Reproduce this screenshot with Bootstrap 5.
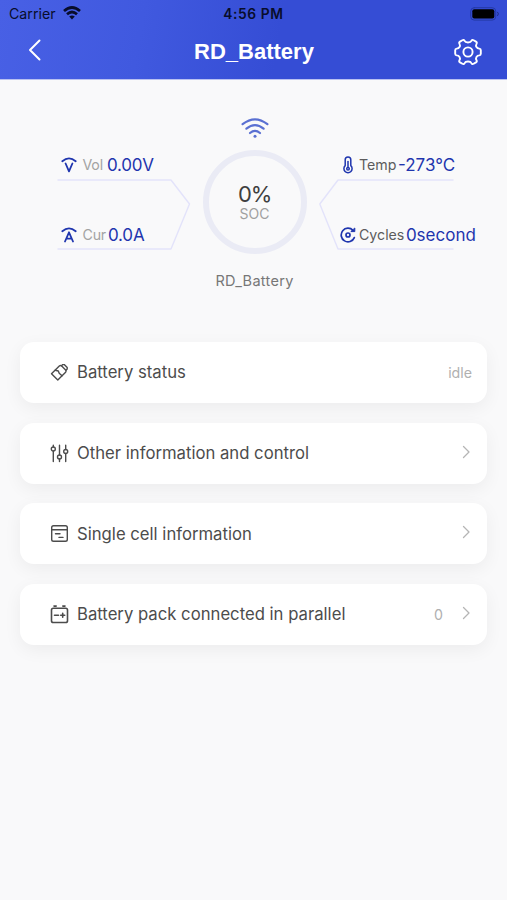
<!DOCTYPE html>
<html lang="en">
<head>
<meta charset="utf-8">
<meta name="viewport" content="width=device-width, initial-scale=1">
<title>RD_Battery</title>
<link href="https://cdn.jsdelivr.net/npm/bootstrap@5.3.0/dist/css/bootstrap.min.css" rel="stylesheet">
<style>
body{background:#f9f9fa;font-family:Inter,"Liberation Sans",sans-serif;color:#4c4c4c;min-height:900px;overflow:hidden}
svg{display:block;flex:none;fill:none;stroke:currentColor;stroke-linecap:round;stroke-linejoin:round}
.top-bar{height:79px;background:linear-gradient(100deg,#4860e5 0%,#4059df 28%,#354dd5 55%,#354dd5 100%);box-shadow:0 1px 0 #b9c1f1}
.status-bar{height:27px;padding:0 7px 0 9px;color:#080d2b;font-size:14.2px}
.status-wifi{stroke-linecap:butt;margin-left:7px}
.side{width:120px}
.clock{font-weight:600;font-size:13.8px;letter-spacing:.6px;position:relative;margin-right:2px;padding-top:1px}
.title-bar{height:50px;padding:0 25px 0 27px}
.title{font:700 22px/28px "Liberation Sans",sans-serif}
.gauge{padding:38px 0 0 57px;height:263px}
.panel{height:88px;margin-top:39px}
.panel-left{width:133px}
.panel-right{width:157px}
.frame-line{left:0;top:23px;color:#e3e3fa}
.reading{height:18px;line-height:18px;font-size:17px;white-space:nowrap;color:#1f35ae}
.panel-left .reading{padding-left:4px;letter-spacing:-.2px}
.panel-right .reading{padding-left:21px}
.reading .name{font-size:14.2px;color:#a3a3a3;margin-left:5.5px}
.panel-left .name{margin-right:2px}
.panel-right .name{color:#5c5c5c;margin-left:3.500px;margin-right:1.5px}
.center-col{width:104px;margin:0 12px 0 12.5px}
.signal{color:#5a70d2}
.ring{width:104px;height:104px;border:6px solid #eaebf5;margin-top:10px}
.percent{font-size:22px;line-height:22px;color:#3e3e3e;letter-spacing:-1.2px}
.soc{font-size:14px;line-height:17px;color:#a0a0a0}
.device{font-size:14.5px;line-height:18px;color:#777;margin-top:18px;letter-spacing:.3px}
.menu-list{padding:0 20px;gap:19.6px}
.item{height:61px;border-radius:14px;background:#fff;box-shadow:0 5px 18px rgba(0,0,0,.055);padding:0 15px 0 30px;font-size:16.7px}
.item .label{margin-left:8px;padding-top:1px}
.note{font-size:14.2px;color:#b0b0b0}
.chev{color:#b5b5b5;margin-bottom:3px}
.chev-gap{margin-left:17px}
</style>
<script src="https://cdn.jsdelivr.net/npm/bootstrap@5.3.0/dist/js/bootstrap.bundle.min.js"></script>
</head>
<body>
<header class="top-bar">
  <div class="status-bar d-flex align-items-center justify-content-between">
    <div class="side d-flex align-items-center"><span>Carrier</span>
      <svg class="status-wifi" width="18" height="14" viewBox="0 0 18 14" stroke-width="2.7"><path d="M1 5Q9-2 17 5M4 8.2Q9 3.8 14 8.2"/><path d="M9 13.400 6.200 10.600Q9 8.300 11.800 10.600Z" fill="currentColor" stroke="none"/></svg>
    </div>
    <span class="clock">4:56 PM</span>
    <div class="side d-flex justify-content-end"><svg width="30" height="14" viewBox="0 0 30 14"><rect x=".7" y=".7" width="25" height="12.400" rx="3.500" stroke="#2439a5"/><rect x="2.300" y="2.300" width="22" height="9.200" rx="2" fill="#000" stroke="none"/><path d="M27.700 5.200q1.600 1.600 0 3.400" stroke="#1d2d83"/></svg></div>
  </div>
  <nav class="title-bar text-white d-flex align-items-center justify-content-between">
    <svg class="mb-1" width="27" height="22" viewBox="0 0 27 22" stroke-width="2"><path d="M12.500 1.500 3 11 12.500 20.500"/></svg>
    <span class="title">RD_Battery</span>
    <svg width="28" height="28" viewBox="0 0 28 28" stroke-width="1.900"><circle cx="14" cy="14" r="4.600"/><path d="M10.600 2.900C11.500 5 16.500 5 17.400 2.900Q18.200 1.400 19.600 2.200L22 3.600Q23.300 4.400 22.500 5.900C21.200 8.200 22.800 10.500 25.300 10.600Q26.800 10.700 26.800 12.200V15.800Q26.800 17.300 25.300 17.400C22.800 17.500 21.200 19.800 22.500 22.100Q23.300 23.600 22 24.400L19.600 25.800Q18.200 26.600 17.400 25.100C16.500 23 11.500 23 10.600 25.100Q9.800 26.600 8.400 25.800L6 24.400Q4.700 23.600 5.500 22.100C6.800 19.800 5.200 17.500 2.700 17.400Q1.200 17.300 1.200 15.800V12.200Q1.200 10.700 2.700 10.600C5.200 10.500 6.800 8.200 5.500 5.900Q4.700 4.400 6 3.600L8.400 2.200Q9.800 1.400 10.600 2.900Z"/></svg>
  </nav>
</header>

<main>
  <section class="gauge d-flex align-items-start">
    <div class="panel panel-left position-relative d-flex flex-column justify-content-between">
      <svg class="frame-line position-absolute" width="134" height="73" viewBox="0 0 134 73" stroke-width="1.400"><path d="M1 1H114L132.500 25 114 70H1"/></svg>
      <div class="reading d-flex align-items-center">
        <svg width="16" height="16" viewBox="0 0 16 16" stroke-width="1.800"><path d="M1.300 4.200Q8-1.500 14.700 4.200M4.600 6.500 8 14.300 11.400 6.500"/></svg>
        <span class="name me-1">Vol</span><span class="value">0.00V</span>
      </div>
      <div class="reading d-flex align-items-center">
        <svg width="16" height="16" viewBox="0 0 16 16" stroke-width="1.800"><path d="M1.300 4.200Q8-1.500 14.700 4.200M4 14.500 8 5.300 12 14.500M5.500 11.700H10.500"/></svg>
        <span class="name">Cur</span><span class="value">0.0A</span>
      </div>
    </div>

    <div class="center-col d-flex flex-column align-items-center">
      <svg class="signal" width="28" height="23" viewBox="0 0 28 23" stroke-width="2.200"><path d="M1.600 7.200Q14-2.600 26.400 7.200M5.400 11.700Q14 4.500 22.600 11.700M9 16Q14 11.700 19 16"/><circle cx="14" cy="19.300" r="1.500" fill="currentColor" stroke="none"/></svg>
      <div class="ring rounded-circle d-flex flex-column align-items-center justify-content-center">
        <span class="percent">0%</span><span class="soc">SOC</span>
      </div>
      <span class="device">RD_Battery</span>
    </div>

    <div class="panel panel-right position-relative d-flex flex-column justify-content-between">
      <svg class="frame-line position-absolute" width="136" height="73" viewBox="0 0 136 73" stroke-width="1.400"><path d="M134 1H19L.8 25 19 70H134"/></svg>
      <div class="reading d-flex align-items-center">
        <svg width="16" height="18" viewBox="0 0 16 18" stroke-width="1.500"><path d="M5.200 9.600V3.800a2.800 2.800 0 0 1 5.600 0V9.600a4.100 4.100 0 1 1-5.600 0Z"/><path d="M8 5.500V11"/><circle cx="8" cy="12.700" r="1.300"/></svg>
        <span class="name">Temp</span><span class="value">-273°C</span>
      </div>
      <div class="reading d-flex align-items-center">
        <svg width="16" height="16" viewBox="0 0 16 16" stroke-width="1.700"><path d="M13 3.400A6.800 6.800 0 1 0 14.300 10.600"/><path d="M11.200 4.600H14.800V1.400Z" fill="currentColor" stroke-width="1"/><circle cx="8" cy="8" r="2"/></svg>
        <span class="name">Cycles</span><span class="value">0second</span>
      </div>
    </div>
  </section>

  <section class="menu-list d-flex flex-column">
    <div class="item d-flex align-items-center">
      <svg width="19" height="19" viewBox="0 0 19 19" stroke-width="1.400"><path d="M1.500 10.800 9.300 3Q10.500 2 11.700 3L15.600 6.900Q16.600 8 15.600 9.200L7.800 17Z"/><path d="M11.500 2.700 12.700 1.600H14.200L17.200 4.600V6L16 7.200M5.200 7.200 8.300 8 9.200 10.300 12 12.700"/></svg>
      <span class="label">Battery status</span><span class="note ms-auto">idle</span>
    </div>
    <div class="item d-flex align-items-center">
      <svg width="19" height="19" viewBox="0 0 19 19" stroke-width="1.400"><path d="M3.300 1.300V3M3.300 7V17.500M9.500 1.300V11M9.500 15V17.500M15.700 1.300V5.500M15.700 9.500V17.500"/><circle cx="3.300" cy="5" r="2"/><circle cx="9.500" cy="13" r="2"/><circle cx="15.700" cy="7.500" r="2"/></svg>
      <span class="label">Other information and control</span>
      <svg class="chev ms-auto" width="12" height="14" viewBox="0 0 12 14" stroke-width="1.300"><path d="M3.500 1.500 9 7 3.500 12.500"/></svg>
    </div>
    <div class="item d-flex align-items-center">
      <svg width="19" height="19" viewBox="0 0 19 19" stroke-width="1.400"><rect x="1.700" y="1.700" width="15.600" height="15.600" rx="1.800"/><path d="M1.700 5.800H17.300M5.500 9.800H10M9 13.400H13"/></svg>
      <span class="label">Single cell information</span>
      <svg class="chev ms-auto" width="12" height="14" viewBox="0 0 12 14" stroke-width="1.300"><path d="M3.500 1.500 9 7 3.500 12.500"/></svg>
    </div>
    <div class="item d-flex align-items-center">
      <svg width="19" height="19" viewBox="0 0 19 19" stroke-width="1.600"><rect x="1.500" y="3.300" width="16" height="14.200" rx="1.800"/><path d="M4 1.100H6.200M12.800 1.100H15M4.500 10.300H8.500M10.700 10.300H14.700M12.700 8.300V12.300"/></svg>
      <span class="label">Battery pack connected in parallel</span>
      <span class="note ms-auto">0</span>
      <svg class="chev chev-gap" width="12" height="14" viewBox="0 0 12 14" stroke-width="1.300"><path d="M3.500 1.500 9 7 3.500 12.500"/></svg>
    </div>
  </section>
</main>
</body>
</html>
